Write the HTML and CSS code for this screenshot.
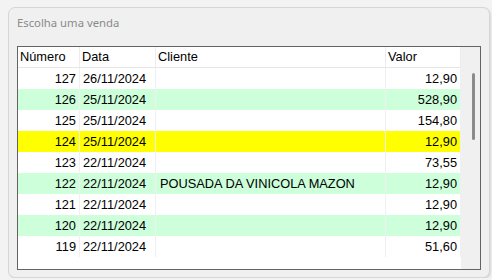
FILE: index.html
```html
<!DOCTYPE html>
<html lang="pt-BR">
<head>
    <meta charset="UTF-8">
    <title>Escolha uma venda</title>
    <link rel="stylesheet" href="styles.css">
</head>
<body>
    <div class="panel">
        <div class="title">Escolha uma venda</div>
        <div class="grid-box">
            <div class="list">
                <div class="row head">
                    <div class="cell">Número</div>
                    <div class="cell">Data</div>
                    <div class="cell">Cliente</div>
                    <div class="cell">Valor</div>
                </div>
                <div class="row">
                    <div class="cell num">127</div>
                    <div class="cell">26/11/2024</div>
                    <div class="cell"></div>
                    <div class="cell num">12,90</div>
                </div>
                <div class="row green">
                    <div class="cell num">126</div>
                    <div class="cell">25/11/2024</div>
                    <div class="cell"></div>
                    <div class="cell num">528,90</div>
                </div>
                <div class="row">
                    <div class="cell num">125</div>
                    <div class="cell">25/11/2024</div>
                    <div class="cell"></div>
                    <div class="cell num">154,80</div>
                </div>
                <div class="row selected">
                    <div class="cell num">124</div>
                    <div class="cell">25/11/2024</div>
                    <div class="cell"></div>
                    <div class="cell num">12,90</div>
                </div>
                <div class="row">
                    <div class="cell num">123</div>
                    <div class="cell">22/11/2024</div>
                    <div class="cell"></div>
                    <div class="cell num">73,55</div>
                </div>
                <div class="row green">
                    <div class="cell num">122</div>
                    <div class="cell">22/11/2024</div>
                    <div class="cell client">POUSADA DA VINICOLA MAZON</div>
                    <div class="cell num">12,90</div>
                </div>
                <div class="row">
                    <div class="cell num">121</div>
                    <div class="cell">22/11/2024</div>
                    <div class="cell"></div>
                    <div class="cell num">12,90</div>
                </div>
                <div class="row green">
                    <div class="cell num">120</div>
                    <div class="cell">22/11/2024</div>
                    <div class="cell"></div>
                    <div class="cell num">12,90</div>
                </div>
                <div class="row">
                    <div class="cell num">119</div>
                    <div class="cell">22/11/2024</div>
                    <div class="cell"></div>
                    <div class="cell num">51,60</div>
                </div>
            </div>
            <div class="scroll">
                <div class="thumb"></div>
            </div>
        </div>
    </div>
</body>
</html>
```

FILE: styles.css
```css
html, body {
    margin: 0;
    background-color: #f3f3f3;
}
body {
    padding: 7px 2px 0 8px;
    font-family: "Liberation Sans", Arial, sans-serif;
}
.panel {
    width: 482px;
    height: 271px;
    box-sizing: border-box;
    border: 1px solid #d6d6d6;
    border-radius: 7px;
    background-color: #f0f0f0;
    box-shadow: 1px 1px 2px rgba(0,0,0,0.12);
    padding: 7px 0 0 8px;
}
.title {
    font-family: "Noto Sans", "Open Sans", sans-serif;
    font-size: 11.3px;
    line-height: 16px;
    color: #8a8a8a;
    height: 16px;
    margin-bottom: 15px;
}
.grid-box {
    display: flex;
    width: 464px;
    height: 224px;
    box-sizing: border-box;
    border: 1px solid #646464;
    background-color: #fff;
}
.list {
    width: 443px;
}
.row {
    display: grid;
    grid-template-columns: 62px 76px 230px 75px;
    height: 21px;
    font-size: 12.8px;
    line-height: 22px;
    color: #000;
}
.row.head {
    height: 20px;
    line-height: 20px;
    border-bottom: 1px solid #e6e6e6;
}
.row.head .cell {
    padding-left: 2px;
    border-right-color: #ececec;
}
.row.green {
    background-color: #ccffda;
}
.row.selected {
    background-color: #ffff00;
}
.cell {
    box-sizing: border-box;
    border-right: 1px solid #f0f0f0;
    padding-left: 3px;
    white-space: nowrap;
    overflow: hidden;
}
.cell.client {
    padding-left: 4px;
}
.cell.num {
    text-align: right;
    padding-left: 0;
    padding-right: 3px;
}
.scroll {
    width: 19px;
    background-color: #f0f0f0;
}
.thumb {
    width: 3px;
    height: 67px;
    margin: 26px 0 0 11px;
    border-radius: 2px;
    background-color: #8b8b8b;
}
```
